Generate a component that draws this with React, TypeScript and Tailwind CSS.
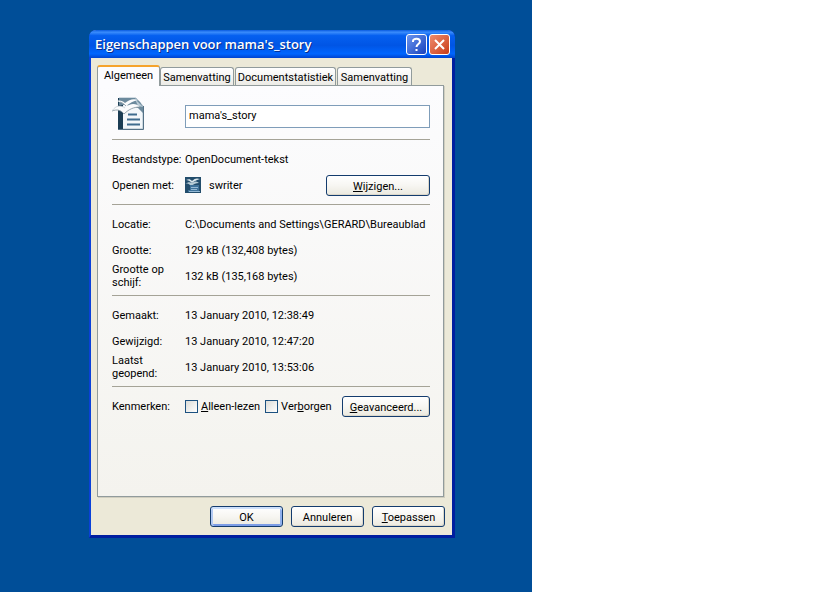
import { useState, type ReactNode } from "react";

function Button({ children, className = "", primary = false }: { children: ReactNode; className?: string; primary?: boolean }) {
  const tone = primary
    ? "shadow-[inset_0_2px_0_#cee0fb,inset_2px_0_0_#b2c9f2,inset_-2px_0_0_#8fb0ec,inset_0_-2px_0_#7d9de6]"
    : "shadow-[inset_-1px_-1px_0_#dcd8cb]";
  return (
    <button
      type="button"
      className={`flex h-[21px] items-center justify-center rounded-[3px] border border-[#143c6e] bg-linear-to-b from-white via-[#f7f6f2] to-[#ebe9df] pt-[2px] text-[11px] leading-[13px] ${tone} ${className}`}
    >
      <span>{children}</span>
    </button>
  );
}

function Row({ label, children }: { label: string; children: ReactNode }) {
  return (
    <div className="grid min-h-[26px] grid-cols-[73px_1fr] items-center">
      <dt className="pr-1">{label}</dt>
      <dd className="flex items-center whitespace-nowrap">{children}</dd>
    </div>
  );
}

function Section({ children }: { children: ReactNode }) {
  return <dl className="border-t border-[#a5a397] py-[6px]">{children}</dl>;
}

function Check({ id, children }: { id: string; children: ReactNode }) {
  return (
    <span className="flex items-center gap-[3px]">
      <input
        id={id}
        type="checkbox"
        className="size-[13px] appearance-none border border-[#1c5180] bg-linear-to-br from-[#dcdcd7] to-white checked:bg-[#21a121]"
      />
      <label htmlFor={id}>{children}</label>
    </span>
  );
}

function DocumentIcon() {
  return (
    <svg width="34" height="34" viewBox="0 0 34 34" aria-hidden="true">
      <path d="M7 1H24L31 9V32H7Z" fill="#f3f7fa" stroke="#a9bac6" />
      <path d="M6 1H11V33H6Z" fill="#1b3d54" />
      <path d="M6 32.500H31.500V9" fill="none" stroke="#547186" />
      <path d="M7 1H23L28 5L31 10V16L26 11L14 8H7Z" fill="#6c8a9d" />
      <path d="M23 2L31 10L26 9Z" fill="#b9cbd6" />
      <path d="M16 17.500H25M15 22.500H28M15 27.500H28" stroke="#3f6c8e" strokeWidth="2" />
      <path d="M4 4C8 3 11 4 13 6C17 3 21 1 26 3C21 4 18 6 14 9C11 6 8 5 4 4Z" fill="#fbfcfd" />
      <path d="M0 14C4 8 9 8 13 11C18 6 24 6 28 10C22 10 17 12 12 17C9 13 5 12 0 14Z" fill="#fbfcfd" />
      <path d="M0 14C5 12 9 13 12 17C17 12 22 10 28 10M8 5C11 6 12 7 14 9" fill="none" stroke="#7f909b" strokeWidth=".8" />
      <path d="M0 14C4 8 9 8 13 11" fill="none" stroke="#c3ccd2" strokeWidth=".8" />
    </svg>
  );
}

function WriterIcon() {
  return (
    <svg width="16" height="16" viewBox="0 0 16 16" aria-hidden="true">
      <path d="M0 0H16V16H0Z" fill="#234d6c" />
      <path d="M1 3C4 2 5 2 7 4C10 1 12 1 15 2C12 3 9 4 7 6C5 4 3 3 1 3Z" fill="#dce8ee" />
      <path d="M0 7C3 5 5 5 7 6C10 4 12 4 14 6C11 6 9 7 6 9C4 7 3 6 0 7Z" fill="#b6cbd6" />
      <path d="M5 8H14V15H3V13H5Z" fill="#3f729a" />
      <path d="M6 10.5H13M4 14.5H15M6 12.5H12" stroke="#a9cce4" strokeWidth=".8" />
    </svg>
  );
}

const tabs = [
  { name: "Samenvatting", width: "w-[74px]" },
  { name: "Documentstatistiek", width: "w-[101px]" },
  { name: "Samenvatting", width: "w-[75px]" },
];

export default function App() {
  const [name, setName] = useState("mama's_story");
  return (
    <div className="grid min-h-screen grid-cols-[minmax(0,19fr)_minmax(0,11fr)] bg-white font-['Roboto','Liberation_Sans',sans-serif] text-[11px] leading-[13px] text-black">
      <main className="bg-[#004e98] pt-[30px] pr-[77px] pl-[89px]">
        <section role="dialog" aria-label="Eigenschappen" className="rounded-t-[7px] border-r-3 border-b-3 border-l-2 border-l-[#0a41d8] border-r-[#001ea0] border-b-[#001ea0] bg-[#ece9d8]">
          <header className="-mr-[3px] -ml-[2px] flex h-7 items-center gap-[2px] rounded-t-[7px] bg-[linear-gradient(#0a5be0,#3a8cfc_8%,#0560f0_20%,#0055e5_55%,#0066ff_85%,#0043cf)] pr-[5px] pl-[6px]">
            <h1 className="flex-1 pt-px font-['Open_Sans','Liberation_Sans',sans-serif] text-[13px] font-semibold text-white [text-shadow:1px_1px_0_#0a2f8a]">Eigenschappen voor mama's_story</h1>
            <button type="button" aria-label="Help" className="grid size-[21px] place-items-center rounded-[3px] border border-white bg-linear-to-br from-[#6c94ee] to-[#1941bd]">
              <svg width="13" height="15" viewBox="0 0 13 15" fill="none" stroke="white" strokeWidth="2" aria-hidden="true">
                <path d="M3 5V4C3 1 10 1 10 4.500C10 7 6.500 7 6.500 10M6.500 12V14" />
              </svg>
            </button>
            <button type="button" aria-label="Sluiten" className="grid size-[21px] place-items-center rounded-[3px] border border-white bg-linear-to-br from-[#ef8b6c] to-[#c83a12]">
              <svg width="13" height="13" viewBox="0 0 13 13" stroke="white" strokeWidth="2" aria-hidden="true">
                <path d="M2 2L11 11M11 2L2 11" />
              </svg>
            </button>
          </header>
          <div className="pt-[7px] pr-[5px] pb-2 pl-[6px]">
            <div role="tablist" className="flex items-end gap-px">
              <button type="button" role="tab" aria-selected="true" className="z-10 -mr-px -mb-px h-[21px] w-[63px] rounded-t-[3px] border-x border-t-2 border-x-[#919b9c] border-t-[#f5a32c] bg-[#fcfcfe] pb-[2px]">
                Algemeen
              </button>
              {tabs.map((tab, i) => (
                <button key={i} type="button" role="tab" aria-selected="false" className={`flex h-[18px] items-center justify-center rounded-t-[3px] border border-b-0 border-[#919b9c] bg-linear-to-b from-white to-[#ecebe6] pt-px whitespace-nowrap ${tab.width}`}>
                  {tab.name}
                </button>
              ))}
            </div>
            <div role="tabpanel" className="mr-[3px] min-h-[412px] border border-[#919b9c] bg-linear-to-b from-[#fcfcfe] to-[#f4f3ee] pr-[13px] pl-[14px] shadow-[1px_1px_0_#d0cebf]">
              <div className="grid grid-cols-[73px_1fr] items-start pt-[11px] pb-[8px]">
                <DocumentIcon />
                <input aria-label="Bestandsnaam" value={name} onChange={(e) => setName(e.target.value)} className="mt-2 h-[23px] w-full min-w-0 border border-[#7f9db9] bg-white px-[3px] pb-[2px] outline-none" />
              </div>
              <Section>
                <Row label="Bestandstype:">OpenDocument-tekst</Row>
                <Row label="Openen met:">
                  <WriterIcon />
                  <span className="ml-2 flex-1">swriter</span>
                  <Button className="w-[104px]"><u>W</u>ijzigen...</Button>
                </Row>
              </Section>
              <Section>
                <Row label="Locatie:">C:\Documents and Settings\GERARD\Bureaublad</Row>
                <Row label="Grootte:">129 kB (132,408 bytes)</Row>
                <Row label="Grootte op schijf:">132 kB (135,168 bytes)</Row>
              </Section>
              <Section>
                <Row label="Gemaakt:">13 January 2010, 12:38:49</Row>
                <Row label="Gewijzigd:">13 January 2010, 12:47:20</Row>
                <Row label="Laatst geopend:">13 January 2010, 13:53:06</Row>
              </Section>
              <Section>
                <Row label="Kenmerken:">
                  <div className="flex flex-1 items-center gap-[5px]">
                    <Check id="readonly"><u>A</u>lleen-lezen</Check>
                    <Check id="hidden">Ver<u>b</u>orgen</Check>
                  </div>
                  <Button className="w-[88px]"><u>G</u>eavanceerd...</Button>
                </Row>
              </Section>
            </div>
            <footer className="mt-[9px] mr-[2px] flex justify-end gap-2">
              <Button primary className="w-[73px]">OK</Button>
              <Button className="w-[73px]">Annuleren</Button>
              <Button className="w-[73px]"><u>T</u>oepassen</Button>
            </footer>
          </div>
        </section>
      </main>
    </div>
  );
}
